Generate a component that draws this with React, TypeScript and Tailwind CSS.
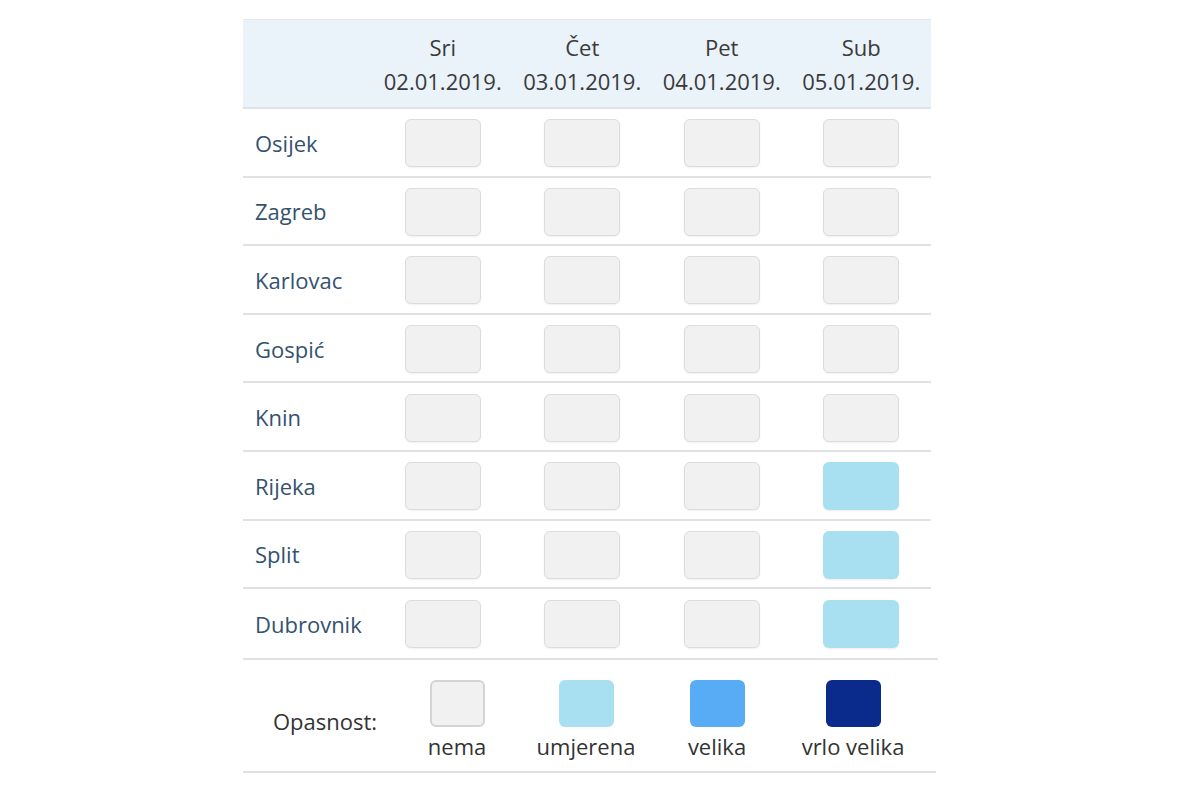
import React from "react";

const days = [
  { d: "Sri", date: "02.01.2019." },
  { d: "Čet", date: "03.01.2019." },
  { d: "Pet", date: "04.01.2019." },
  { d: "Sub", date: "05.01.2019." },
];

const cities: { name: string; levels: number[] }[] = [
  { name: "Osijek", levels: [0, 0, 0, 0] },
  { name: "Zagreb", levels: [0, 0, 0, 0] },
  { name: "Karlovac", levels: [0, 0, 0, 0] },
  { name: "Gospić", levels: [0, 0, 0, 0] },
  { name: "Knin", levels: [0, 0, 0, 0] },
  { name: "Rijeka", levels: [0, 0, 0, 1] },
  { name: "Split", levels: [0, 0, 0, 1] },
  { name: "Dubrovnik", levels: [0, 0, 0, 1] },
];

function Box({ level }: { level: number }) {
  if (level === 1) {
    return <div className="w-[76px] h-[48px] rounded-[6px] bg-[#a8e0f2] shadow-[0_1px_2px_rgba(0,0,0,0.08)]" />;
  }
  return (
    <div className="w-[76px] h-[48px] rounded-[6px] bg-[#f1f1f1] border border-[#dcdcdc] shadow-[0_1px_2px_rgba(0,0,0,0.06)]" />
  );
}

export default function App() {
  return (
    <div
      className="w-[1200px] h-[800px] bg-white pt-[19px] pl-[243px]"
      style={{ fontFamily: '"Open Sans", "Noto Sans", sans-serif' }}
    >
      <div className="w-[688px]">
        <div className="grid grid-cols-[130px_139.5px_139.5px_139.5px_139.5px] h-[90px] bg-[#eaf2fa] border-t border-[#e3e8ee] border-b-2 border-b-[#dde3ea] items-center">
          <div />
          {days.map((d) => (
            <div key={d.date} className="text-center text-[22px] leading-[34px] text-[#3a3a3a]">
              <div>{d.d}</div>
              <div>{d.date}</div>
            </div>
          ))}
        </div>
        {cities.map((c, i) => (
          <div
            key={c.name}
            className={
              "grid grid-cols-[130px_139.5px_139.5px_139.5px_139.5px] h-[68.6px] items-center pt-[2px] " +
              (i < cities.length - 1 ? "border-b-2 border-[#e1e1e1]" : "")
            }
          >
            <div className="pl-[12px] text-[22px] text-[#34526e]">{c.name}</div>
            {c.levels.map((l, j) => (
              <div key={j} className="flex justify-center">
                <Box level={l} />
              </div>
            ))}
          </div>
        ))}
      </div>
      <div className="w-[695px] border-t-2 border-[#e1e1e1]">
        <div className="w-[693px] h-[113px] border-b-2 border-[#e1e1e1] grid grid-cols-[150px_128px_130px_132px_140px] pt-[20px]">
          <div className="pl-[14px] text-center pt-[26px] text-[22px] leading-[30px] text-[#333]">Opasnost:</div>
          {[
            { label: "nema", cls: "bg-[#f1f1f1] border-2 border-[#d4d4d4]" },
            { label: "umjerena", cls: "bg-[#a8e0f2]" },
            { label: "velika", cls: "bg-[#58acf5]" },
            { label: "vrlo velika", cls: "bg-[#0a2a8c]" },
          ].map((it) => (
            <div key={it.label} className="flex flex-col items-center">
              <div className={"w-[55px] h-[47px] rounded-[6px] " + it.cls} />
              <div className="mt-[5px] text-[22px] leading-[28px] text-[#333]">{it.label}</div>
            </div>
          ))}
        </div>
      </div>
    </div>
  );
}
